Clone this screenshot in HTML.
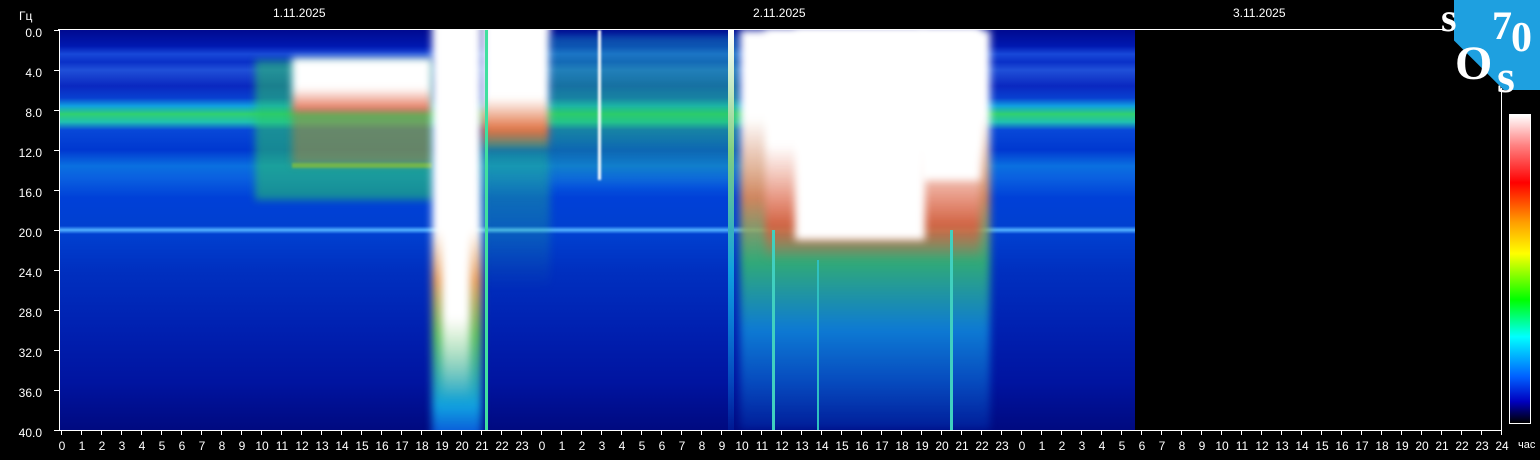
<!DOCTYPE html>
<html><head><meta charset="utf-8"><style>
body{margin:0;width:1540px;height:460px;background:#000;position:relative;overflow:hidden;font-family:"Liberation Sans",sans-serif;color:#fff}
.a{position:absolute}
.b{position:absolute;filter:blur(4px)}
.t{position:absolute;font-size:12px;line-height:12px}
.yl{position:absolute;font-size:12px;right:1498px;line-height:12px}
.xl{position:absolute;top:439px;font-size:12px;width:20px;text-align:center;margin-left:-10px}
</style></head><body>
<div class="t" style="left:19px;top:10px">Гц</div>
<div class="t" style="left:273px;top:7px">1.11.2025</div>
<div class="t" style="left:753px;top:7px">2.11.2025</div>
<div class="t" style="left:1233px;top:7px">3.11.2025</div>

<div class="a" style="left:60px;top:30px;width:1075px;height:400px;overflow:hidden">
<div class="a" style="left:0;top:0;width:1075px;height:400px;background:linear-gradient(180deg,#000a90 0%,#0018b0 4%,#1848d8 6%,#0a30c8 8%,#2050d8 10%,#0a28c0 14%,#0840d0 17%,#10a0e0 19%,#30d070 21%,#20c0b0 23%,#0848d8 25%,#0038d0 30%,#0a70e0 34%,#0a60e0 37%,#0040d8 42%,#0040d0 49%,#50b0ff 50%,#0040d0 51%,#0030c0 60%,#0020b0 75%,#0014a0 88%,#000a80 100%)"></div>
<div class="b" style="left:195px;top:30px;width:180px;height:140px;background:rgba(40,200,100,.55)"></div>
<div class="b" style="left:232px;top:28px;width:140px;height:55px;background:linear-gradient(180deg,#fff 0%,#fff 55%,#e06040 100%)"></div>
<div class="b" style="left:232px;top:85px;width:140px;height:50px;background:rgba(180,130,60,.5)"></div>
<div class="a" style="left:232px;top:133px;width:140px;height:5px;background:rgba(150,200,40,.6);filter:blur(1px)"></div>
<!-- evening burst -->
<div class="b" style="left:372px;top:-10px;width:50px;height:420px;background:linear-gradient(180deg,#fff 0%,#fff 50%,#e8a060 62%,#60c060 75%,#10a0e0 92%,#0848d8 100%)"></div>
<div class="b" style="left:382px;top:-10px;width:28px;height:380px;background:linear-gradient(180deg,#fff 78%,rgba(255,255,255,0))"></div>
<div class="b" style="left:422px;top:-10px;width:68px;height:130px;background:linear-gradient(180deg,#fff 0%,#fff 60%,#e07040 85%,rgba(60,200,100,.6))"></div>
<div class="b" style="left:422px;top:120px;width:68px;height:140px;background:linear-gradient(180deg,rgba(40,200,120,.5),rgba(20,100,220,0))"></div>
<div class="a" style="left:425px;top:0;width:3px;height:400px;background:#40e0a0"></div>
<div class="b" style="left:490px;top:5px;width:190px;height:150px;background:linear-gradient(180deg,rgba(30,180,200,.35),rgba(40,200,100,.55) 55%,rgba(20,120,220,.2))"></div>
<div class="a" style="left:538px;top:0;width:3px;height:150px;background:#fff;filter:blur(1px)"></div>
<div class="a" style="left:668px;top:0;width:6px;height:400px;background:linear-gradient(180deg,#fff,#80d080 30%,#10a0e0 60%,rgba(0,80,220,.2))"></div>
<!-- day-2 big burst -->
<div class="b" style="left:680px;top:0;width:250px;height:400px;background:linear-gradient(180deg,#fff 0%,#fff 22%,rgba(230,140,80,.9) 42%,rgba(60,200,100,.8) 58%,rgba(20,170,230,.65) 75%,rgba(0,80,220,.25) 100%)"></div>
<div class="b" style="left:705px;top:0;width:215px;height:230px;background:linear-gradient(180deg,#fff 0%,#fff 50%,rgba(220,90,60,.85) 85%,rgba(200,200,60,0))"></div>
<div class="b" style="left:735px;top:0;width:130px;height:210px;background:#fff"></div>
<div class="b" style="left:860px;top:0;width:60px;height:150px;background:#fff"></div>
<div class="a" style="left:712px;top:200px;width:3px;height:200px;background:#40d0c0"></div>
<div class="a" style="left:890px;top:200px;width:3px;height:200px;background:#40d0c0"></div>
<div class="a" style="left:757px;top:230px;width:2px;height:170px;background:#30c0c0"></div>
</div>

<div class="a" style="left:58px;top:29px;width:1385px;height:1px;background:#fff"></div>
<div class="a" style="left:59px;top:29px;width:1px;height:402px;background:#fff"></div>
<div class="a" style="left:59px;top:430px;width:1443px;height:1px;background:#fff"></div>
<div class="a" style="left:1501px;top:88px;width:1px;height:343px;background:#fff"></div>
<svg class="a" style="left:0;top:0" width="1540" height="460">
<g stroke="#fff" stroke-width="1">
<line x1="54" y1="30.5" x2="59" y2="30.5"/><line x1="54" y1="70.5" x2="59" y2="70.5"/><line x1="54" y1="110.5" x2="59" y2="110.5"/><line x1="54" y1="150.5" x2="59" y2="150.5"/><line x1="54" y1="190.5" x2="59" y2="190.5"/><line x1="54" y1="230.5" x2="59" y2="230.5"/><line x1="54" y1="270.5" x2="59" y2="270.5"/><line x1="54" y1="310.5" x2="59" y2="310.5"/><line x1="54" y1="350.5" x2="59" y2="350.5"/><line x1="54" y1="390.5" x2="59" y2="390.5"/><line x1="54" y1="430.5" x2="59" y2="430.5"/>
</g>
<g stroke="#fff" id="xt"></g>
</svg>
<div class="yl" style="top:27px">0.0</div><div class="yl" style="top:67px">4.0</div><div class="yl" style="top:107px">8.0</div><div class="yl" style="top:147px">12.0</div><div class="yl" style="top:187px">16.0</div><div class="yl" style="top:227px">20.0</div><div class="yl" style="top:267px">24.0</div><div class="yl" style="top:307px">28.0</div><div class="yl" style="top:347px">32.0</div><div class="yl" style="top:387px">36.0</div><div class="yl" style="top:427px">40.0</div>
<div id="xl"></div>
<script>
var s='',t='';
for(var i=0;i<=72;i++){var x=61+i*20;var h=(i%24);if(i==72)h=24;
s+='<div class="xl" style="left:'+(x+1)+'px">'+h+'</div>';
t+='<line x1="'+(x+.5)+'" y1="431" x2="'+(x+.5)+'" y2="435"/>';}
document.getElementById('xl').innerHTML=s;
document.getElementById('xt').innerHTML=t;
</script>
<div class="t" style="left:1518px;top:439px;font-size:11px">час</div>
<div class="a" style="left:1454px;top:0;width:86px;height:90px;background:#1ea0e0;clip-path:polygon(0 0,100% 0,100% 100%,58% 100%,0 45%)"></div>
<div class="a" style="left:1441px;top:-6px;font:bold 40px 'Liberation Serif',serif;color:#fff">s</div>
<div class="a" style="left:1492px;top:2px;font:bold 40px 'Liberation Serif',serif;color:#fff">7</div>
<div class="a" style="left:1511px;top:14px;font:bold 42px 'Liberation Serif',serif;color:#fff">0</div>
<div class="a" style="left:1455px;top:36px;font:bold 48px 'Liberation Serif',serif;color:#fff">O</div>
<div class="a" style="left:1497px;top:50px;font:bold 46px 'Liberation Serif',serif;color:#fff">s</div>
<div class="a" style="left:1509px;top:114px;width:20px;height:308px;border:1px solid #fff;background:linear-gradient(180deg,#fff 0%,#ff8080 10%,#ff0000 22%,#ffa000 35%,#ffff00 45%,#00ff00 60%,#00ffff 72%,#0060ff 85%,#0000c0 93%,#000 100%)"></div>
</body></html>
